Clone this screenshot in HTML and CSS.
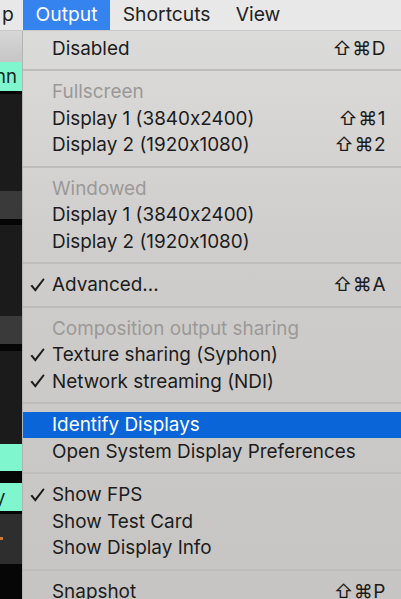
FILE: index.html
```html
<!DOCTYPE html>
<html>
<head>
<meta charset="utf-8">
<link rel="stylesheet" href="styles.css">
</head>
<body>
<div class="menubar">
  <span class="mb-item mb-app">p</span>
  <span class="mb-item mb-active">Output</span>
  <span class="mb-item">Shortcuts</span>
  <span class="mb-item">View</span>
</div>
<div class="screen">
  <div class="side">
    <div class="blk toolbar"></div>
    <div class="blk mint m1"><span class="mint-text">nn</span></div>
    <div class="blk black b3"></div>
    <div class="blk dark d97"></div>
    <div class="blk mid m28"></div>
    <div class="blk black b6"></div>
    <div class="blk dark d91"></div>
    <div class="blk mid m28"></div>
    <div class="blk black b7"></div>
    <div class="blk dark d93"></div>
    <div class="blk mint m27"></div>
    <div class="blk black b12"></div>
    <div class="blk mint m28b"><span class="mint-text">y</span></div>
    <div class="blk black b3"></div>
    <div class="blk grey g50"><span class="orange"></span></div>
    <div class="blk black rest"></div>
  </div>
  <div class="menu">
    <div class="row"><span class="check"></span><span class="label">Disabled</span><span class="key">⇧⌘D</span></div>
    <div class="sep"></div>
    <div class="row disabled"><span class="check"></span><span class="label">Fullscreen</span></div>
    <div class="row"><span class="check"></span><span class="label">Display 1 (3840x2400)</span><span class="key">⇧⌘1</span></div>
    <div class="row"><span class="check"></span><span class="label">Display 2 (1920x1080)</span><span class="key">⇧⌘2</span></div>
    <div class="sep"></div>
    <div class="row disabled"><span class="check"></span><span class="label">Windowed</span></div>
    <div class="row"><span class="check"></span><span class="label">Display 1 (3840x2400)</span></div>
    <div class="row"><span class="check"></span><span class="label">Display 2 (1920x1080)</span></div>
    <div class="sep"></div>
    <div class="row"><span class="check"><svg class="tick" viewBox="0 0 16 15"><path d="M0.4 8.4 L2.4 7.1 L5.5 11.2 L14.1 0.4 L15.6 1.5 L5.7 14.6 Z"/></svg></span><span class="label">Advanced...</span><span class="key">⇧⌘A</span></div>
    <div class="sep"></div>
    <div class="row disabled"><span class="check"></span><span class="label">Composition output sharing</span></div>
    <div class="row"><span class="check"><svg class="tick" viewBox="0 0 16 15"><path d="M0.4 8.4 L2.4 7.1 L5.5 11.2 L14.1 0.4 L15.6 1.5 L5.7 14.6 Z"/></svg></span><span class="label">Texture sharing (Syphon)</span></div>
    <div class="row"><span class="check"><svg class="tick" viewBox="0 0 16 15"><path d="M0.4 8.4 L2.4 7.1 L5.5 11.2 L14.1 0.4 L15.6 1.5 L5.7 14.6 Z"/></svg></span><span class="label">Network streaming (NDI)</span></div>
    <div class="sep"></div>
    <div class="row selected"><span class="check"></span><span class="label">Identify Displays</span></div>
    <div class="row"><span class="check"></span><span class="label">Open System Display Preferences</span></div>
    <div class="sep"></div>
    <div class="row"><span class="check"><svg class="tick" viewBox="0 0 16 15"><path d="M0.4 8.4 L2.4 7.1 L5.5 11.2 L14.1 0.4 L15.6 1.5 L5.7 14.6 Z"/></svg></span><span class="label">Show FPS</span></div>
    <div class="row"><span class="check"></span><span class="label">Show Test Card</span></div>
    <div class="row"><span class="check"></span><span class="label">Show Display Info</span></div>
    <div class="sep"></div>
    <div class="row"><span class="check"></span><span class="label">Snapshot</span><span class="key">⇧⌘P</span></div>
  </div>
</div>
</body>
</html>
```
FILE: styles.css
```css
html, body {
  margin: 0;
  padding: 0;
  width: 401px;
  height: 599px;
  overflow: hidden;
  background: #0a0a0a;
  font-family: Inter, "Liberation Sans", sans-serif;
  font-feature-settings: "calt" 0;
}

.menubar {
  height: 31px;
  display: flex;
  align-items: stretch;
  background: #e8e8e8;
  border-bottom: 1px solid #c9c9c9;
  box-sizing: border-box;
  font-size: 19.3px;
  color: #222;
}

.mb-item {
  flex: none;
  display: flex;
  align-items: center;
  padding: 0 12.6px;
  line-height: 1;
}

.mb-item.mb-app {
  width: 23px;
  box-sizing: border-box;
  padding: 0 0 0 2px;
  overflow: hidden;
}

.mb-active {
  background: #3483ef;
  color: #fff;
}

.screen {
  display: flex;
  height: 568px;
}

.side {
  width: 22px;
  flex: none;
  display: flex;
  flex-direction: column;
  overflow: hidden;
}

.blk { flex: none; overflow: hidden; }
.toolbar { height: 31px; background: linear-gradient(#d6d6d6, #c6c6c6); }
.mint { background: #80f6cf; }
.m1 { height: 29px; }
.m27 { height: 27px; }
.m28b { height: 28px; }
.black { background: #060606; }
.b3 { height: 3px; }
.b6 { height: 6px; }
.b7 { height: 7px; }
.b12 { height: 12px; }
.dark { background: #1c1b1b; }
.d97 { height: 97px; }
.d91 { height: 91px; }
.d93 { height: 93px; }
.mid { background: #3a3a3a; }
.m28 { height: 28px; }
.grey { background: #2f2e2e; height: 50px; }
.rest { flex: 1; }

.mint-text {
  display: block;
  font-size: 18.6px;
  color: #1a2a24;
  line-height: 29px;
  margin-left: -5px;
  white-space: nowrap;
}

.orange {
  display: block;
  width: 3px;
  height: 3px;
  background: #c97a3a;
  margin-top: 23px;
}

.menu {
  flex: 1;
  background: linear-gradient(#dbdbda, #cfcdcb 40%, #c7c5c3);
  border-left: 1px solid #b4b4b4;
  padding-top: 4px;
  font-size: 18.9px;
  color: #1c1c1c;
  box-sizing: border-box;
}

.row {
  height: 26.5px;
  display: flex;
  align-items: center;
  white-space: nowrap;
}

.check {
  width: 29px;
  flex: none;
  padding-left: 7px;
  box-sizing: border-box;
  display: flex;
  align-items: center;
}

.tick {
  width: 15px;
  height: 14px;
  fill: #1c1c1c;
  display: block;
}

.label { flex: none; }

.key {
  margin-left: auto;
  padding-right: 15px;
  font-family: Inter, "DejaVu Sans", sans-serif;
  font-size: 19px;
  letter-spacing: 0.5px;
}

.disabled { color: #9b9997; }

.selected {
  background: #0a65d9;
  color: #fff;
}

.sep {
  height: 2px;
  margin: 7.5px 0;
  background: #bfbdbb;
}
```
